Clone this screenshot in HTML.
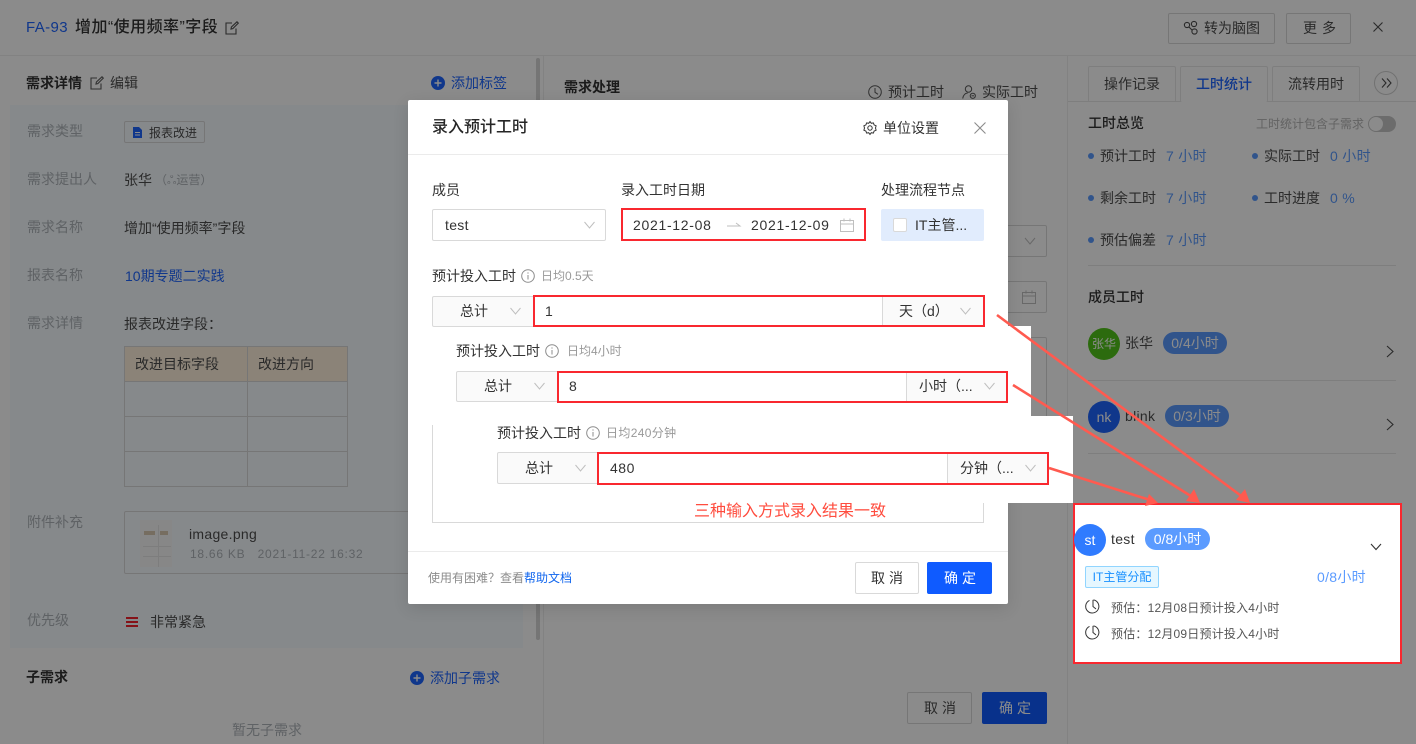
<!DOCTYPE html>
<html lang="zh">
<head>
<meta charset="utf-8">
<title>录入预计工时</title>
<style>
html,body{margin:0;padding:0}
body{width:1416px;height:744px;position:relative;overflow:hidden;background:#fff;font-family:"Liberation Sans","Noto Sans CJK SC",sans-serif;font-size:14px;color:#222}
.a{position:absolute;box-sizing:border-box}
.t{position:absolute;white-space:nowrap;line-height:20px;height:20px}
.l{color:#aeb4b9}
.b{font-weight:500;color:#333}
.blue{color:#1f66ff}
.v{color:#5b9bff;letter-spacing:.3px}
.dk{color:#4d4d4d}
.dot{position:absolute;width:6px;height:6px;border-radius:50%;background:#5b9bff}
.m{color:#333}
.g{color:#999;font-size:12px}
.bx{position:absolute;box-sizing:border-box;border:1px solid #d9d9d9;border-radius:2px}
svg{position:absolute;overflow:visible}
.red{position:absolute;box-sizing:border-box;border:2px solid #f9282f}
.num{letter-spacing:.7px}
</style>
</head>
<body>
<!-- page structure lines -->
<div class="a" style="left:0;top:55px;width:1416px;height:1px;background:#eee"></div>
<div class="a" style="left:543px;top:56px;width:1px;height:688px;background:#eee"></div>
<div class="a" style="left:1067px;top:56px;width:1px;height:688px;background:#eee"></div>
<div class="a" style="left:10px;top:105px;width:513px;height:543px;background:#f6fbff"></div>
<div class="a" style="left:536px;top:58px;width:4px;height:582px;background:#d7d7d7;border-radius:2px"></div>

<!-- header -->
<div class="t" style="left:26px;top:18px;font-size:15px;color:#1f66ff;letter-spacing:.4px">FA-93</div>
<div class="t b" style="left:75px;top:18px;font-size:16px;letter-spacing:.45px">增加“使用频率”字段</div>
<svg style="left:225px;top:21px" width="14" height="14" viewBox="0 0 14 14" fill="none" stroke="#4d4d4d" stroke-width="1.1"><path d="M11 7.5V13H1V2h6M6 8l.4-2L12 .8l1.3 1.3L7.8 7.6z"/></svg>

<div class="bx" style="left:1168px;top:13px;width:107px;height:31px"></div>
<svg style="left:1183px;top:20px" width="16" height="16" viewBox="0 0 16 16" fill="none" stroke="#4d4d4d" stroke-width="1.1"><circle cx="4" cy="5" r="2.6"/><circle cx="11" cy="4" r="2.6"/><circle cx="11.5" cy="11.5" r="2.6"/><path d="M6 7l3 3"/></svg>
<div class="t dk" style="left:1204px;top:18px">转为脑图</div>
<div class="bx" style="left:1286px;top:13px;width:65px;height:31px"></div>
<div class="t dk" style="left:1303px;top:18px;letter-spacing:5px">更多</div>
<svg style="left:1373px;top:22px" width="10" height="10" viewBox="0 0 10 10" stroke="#4d4d4d" stroke-width="1.1"><path d="M.5.5l9 9M9.5.5l-9 9"/></svg>

<!-- left column -->
<div class="t b" style="left:26px;top:73px;font-weight:700">需求详情</div>
<svg style="left:90px;top:76px" width="14" height="14" viewBox="0 0 14 14" fill="none" stroke="#5a5a5a" stroke-width="1.1"><path d="M11 7.5V13H1V2h6M6 8l.4-2L12 .8l1.3 1.3L7.8 7.6z"/></svg>
<div class="t dk" style="left:110px;top:73px">编辑</div>
<svg style="left:431px;top:76px" width="14" height="14" viewBox="0 0 14 14"><circle cx="7" cy="7" r="7" fill="#1f66ff"/><path d="M7 3.5v7M3.5 7h7" stroke="#fff" stroke-width="1.4"/></svg>
<div class="t blue" style="left:451px;top:73px">添加标签</div>

<div class="t l" style="left:27px;top:121px">需求类型</div>
<div class="t l" style="left:27px;top:169px">需求提出人</div>
<div class="t l" style="left:27px;top:217px">需求名称</div>
<div class="t l" style="left:27px;top:265px">报表名称</div>
<div class="t l" style="left:27px;top:313px">需求详情</div>
<div class="t l" style="left:27px;top:512px">附件补充</div>
<div class="t l" style="left:27px;top:610px">优先级</div>

<div class="bx" style="left:124px;top:121px;width:81px;height:22px"></div>
<svg style="left:133px;top:127px" width="9" height="11" viewBox="0 0 9 11"><path d="M0 0h6l3 3v8H0z" fill="#1f66ff"/><path d="M2 5.5h5M2 8h5" stroke="#fff"/></svg>
<div class="t dk" style="left:149px;top:123px;font-size:12px">报表改进</div>
<div class="t dk" style="left:124px;top:170px">张华</div>
<div class="t l" style="left:155px;top:170px;font-size:12px">（ஃ运营）</div>
<div class="t dk" style="left:124px;top:218px">增加“使用频率”字段</div>
<div class="t blue" style="left:125px;top:266px">10期专题二实践</div>
<div class="t dk" style="left:124px;top:314px">报表改进字段：</div>

<div class="a" style="left:124px;top:346px;width:224px;height:35px;background:#fff1dc"></div>
<svg style="left:124px;top:346px" width="224" height="141" fill="none" stroke="#d9d9d9" stroke-width="1"><path d="M.5.5h223v140H.5zM123.5.5v140M.5 35.5h223M.5 70.5h223M.5 105.5h223"/></svg>
<div class="t dk" style="left:135px;top:354px">改进目标字段</div>
<div class="t dk" style="left:258px;top:354px">改进方向</div>

<div class="bx" style="left:124px;top:511px;width:300px;height:63px"></div>
<div class="a" style="left:140px;top:520px;width:32px;height:47px;background:#f7f7f7"></div>
<div class="a" style="left:144px;top:531px;width:11px;height:4px;background:#d8c8b0"></div>
<div class="a" style="left:160px;top:531px;width:8px;height:4px;background:#d8c8b0"></div>
<div class="a" style="left:143px;top:546px;width:28px;height:1px;background:#e6e6e6"></div>
<div class="a" style="left:143px;top:556px;width:28px;height:1px;background:#e6e6e6"></div>
<div class="a" style="left:158px;top:525px;width:1px;height:42px;background:#e6e6e6"></div>
<div class="t dk" style="left:189px;top:524px;letter-spacing:.3px">image.png</div>
<div class="t l" style="left:190px;top:544px;font-size:12px;letter-spacing:.75px">18.66 KB&nbsp;&nbsp; 2021-11-22 16:32</div>

<div class="a" style="left:126px;top:617px;width:12px;height:2px;background:#f5222d"></div>
<div class="a" style="left:126px;top:621px;width:12px;height:2px;background:#f5222d"></div>
<div class="a" style="left:126px;top:625px;width:12px;height:2px;background:#f5222d"></div>
<div class="t dk" style="left:150px;top:612px">非常紧急</div>

<div class="t b" style="left:26px;top:667px;font-weight:700">子需求</div>
<svg style="left:410px;top:671px" width="14" height="14" viewBox="0 0 14 14"><circle cx="7" cy="7" r="7" fill="#1f66ff"/><path d="M7 3.5v7M3.5 7h7" stroke="#fff" stroke-width="1.4"/></svg>
<div class="t blue" style="left:430px;top:668px">添加子需求</div>
<div class="t l" style="left:232px;top:720px">暂无子需求</div>

<!-- middle column -->
<div class="t b" style="left:564px;top:77px;font-weight:700">需求处理</div>
<svg style="left:868px;top:85px" width="14" height="14" viewBox="0 0 14 14" fill="none" stroke="#5a5a5a" stroke-width="1"><circle cx="7" cy="7" r="6.3"/><path d="M7 3v4.3l3 2"/></svg>
<div class="t dk" style="left:888px;top:82px">预计工时</div>
<svg style="left:962px;top:85px" width="14" height="14" viewBox="0 0 14 14" fill="none" stroke="#5a5a5a" stroke-width="1"><circle cx="6.5" cy="4" r="3.2"/><path d="M.7 13.5c.6-3.5 2.6-5.3 5-5.5"/><circle cx="10.8" cy="10.8" r="2.6"/><path d="M9.5 10.8h2.6"/></svg>
<div class="t dk" style="left:982px;top:82px">实际工时</div>

<div class="bx" style="left:960px;top:225px;width:87px;height:32px"></div>
<svg style="left:1024px;top:237px" width="12" height="8" fill="none" stroke="#bfbfbf"><path d="M1 1l5 6 5-6"/></svg>
<div class="bx" style="left:960px;top:281px;width:87px;height:32px"></div>
<svg style="left:1022px;top:290px" width="14" height="14" viewBox="0 0 14 14" fill="none" stroke="#bfbfbf"><path d="M.5 2.5h13v11H.5zM.5 6h13M4 .5v3M10 .5v3"/></svg>
<div class="bx" style="left:960px;top:337px;width:87px;height:100px"></div>

<div class="bx" style="left:907px;top:692px;width:65px;height:32px"></div>
<div class="t dk" style="left:924px;top:698px;letter-spacing:4px">取消</div>
<div class="a" style="left:982px;top:692px;width:65px;height:32px;background:#0f5bff;border-radius:2px"></div>
<div class="t" style="left:999px;top:698px;letter-spacing:4px;color:#fff">确定</div>

<!-- right column -->
<div class="a" style="left:1068px;top:101px;width:348px;height:1px;background:#e8e8e8"></div>
<div class="bx" style="left:1088px;top:66px;width:88px;height:36px;border-color:#e8e8e8;border-bottom:0"></div>
<div class="t dk" style="left:1104px;top:74px">操作记录</div>
<div class="bx" style="left:1180px;top:66px;width:88px;height:36px;border-color:#e8e8e8;border-bottom:0;background:#fff"></div>
<div class="t blue" style="left:1196px;top:74px;font-weight:500">工时统计</div>
<div class="bx" style="left:1272px;top:66px;width:88px;height:36px;border-color:#e8e8e8;border-bottom:0"></div>
<div class="t dk" style="left:1288px;top:74px">流转用时</div>
<div class="a" style="left:1374px;top:71px;width:24px;height:24px;border:1px solid #d0d0d0;border-radius:50%"></div>
<svg style="left:1381px;top:78px" width="11" height="10" fill="none" stroke="#4d4d4d" stroke-width="1.1"><path d="M1 .5L5 5 1 9.5M6 .5L10 5 6 9.5"/></svg>

<div class="t b" style="left:1088px;top:113px">工时总览</div>
<div class="t" style="left:1256px;top:114px;font-size:12px;color:#b5b5b5">工时统计包含子需求</div>
<div class="a" style="left:1368px;top:116px;width:28px;height:16px;border-radius:8px;background:#c6c6c6"></div>
<div class="a" style="left:1369px;top:117px;width:14px;height:14px;border-radius:50%;background:#fff"></div>

<div class="dot" style="left:1088px;top:153px"></div>
<div class="t dk" style="left:1100px;top:146px">预计工时</div>
<div class="t v" style="left:1166px;top:146px">7 小时</div>
<div class="dot" style="left:1252px;top:153px"></div>
<div class="t dk" style="left:1264px;top:146px">实际工时</div>
<div class="t v" style="left:1330px;top:146px">0 小时</div>
<div class="dot" style="left:1088px;top:195px"></div>
<div class="t dk" style="left:1100px;top:188px">剩余工时</div>
<div class="t v" style="left:1166px;top:188px">7 小时</div>
<div class="dot" style="left:1252px;top:195px"></div>
<div class="t dk" style="left:1264px;top:188px">工时进度</div>
<div class="t v" style="left:1330px;top:188px">0 %</div>
<div class="dot" style="left:1088px;top:237px"></div>
<div class="t dk" style="left:1100px;top:230px">预估偏差</div>
<div class="t v" style="left:1166px;top:230px">7 小时</div>
<div class="a" style="left:1088px;top:265px;width:308px;height:1px;background:#e8e8e8"></div>

<div class="t b" style="left:1088px;top:287px">成员工时</div>
<div class="a" style="left:1088px;top:328px;width:32px;height:32px;border-radius:50%;background:#52c41a;color:#fff;font-size:12px;line-height:32px;text-align:center">张华</div>
<div class="t dk" style="left:1125px;top:333px">张华</div>
<div class="a" style="left:1163px;top:332px;width:64px;height:22px;border-radius:11px;background:#5b9bff;color:#fff;line-height:22px;text-align:center">0/4小时</div>
<svg style="left:1386px;top:345px" width="8" height="13" fill="none" stroke="#4d4d4d" stroke-width="1.1"><path d="M1 1l6 5.5L1 12"/></svg>
<div class="a" style="left:1088px;top:380px;width:308px;height:1px;background:#e8e8e8"></div>
<div class="a" style="left:1088px;top:401px;width:32px;height:32px;border-radius:50%;background:#1f66ff;color:#fff;font-size:14px;line-height:32px;text-align:center">nk</div>
<div class="t dk" style="left:1125px;top:406px;letter-spacing:.3px">blink</div>
<div class="a" style="left:1165px;top:405px;width:64px;height:22px;border-radius:11px;background:#5b9bff;color:#fff;line-height:22px;text-align:center">0/3小时</div>
<svg style="left:1386px;top:418px" width="8" height="13" fill="none" stroke="#4d4d4d" stroke-width="1.1"><path d="M1 1l6 5.5L1 12"/></svg>
<div class="a" style="left:1088px;top:453px;width:308px;height:1px;background:#e8e8e8"></div>

<!-- dimming mask -->
<div class="a" style="left:0;top:0;width:1416px;height:744px;background:rgba(0,0,0,.455)"></div>

<!-- modal -->
<div class="a" style="left:408px;top:100px;width:600px;height:504px;background:#fff;border-radius:2px;box-shadow:0 4px 16px rgba(0,0,0,.12)"></div>
<!-- pasted white patches -->
<div class="a" style="left:1008px;top:326px;width:23px;height:90px;background:#fff"></div>
<div class="a" style="left:1008px;top:416px;width:65px;height:87px;background:#fff"></div>

<div class="t" style="left:432px;top:118px;font-size:16px;font-weight:500;color:#262626">录入预计工时</div>
<svg style="left:863px;top:121px" width="14" height="14" viewBox="0 0 14 14" fill="none" stroke="#333" stroke-width="1"><path d="M7 .6l1.3 1.7 2.1-.4.7 2 2 .9-.6 2.2.6 2.2-2 .9-.7 2-2.1-.4L7 13.4l-1.3-1.7-2.1.4-.7-2-2-.9.6-2.2-.6-2.2 2-.9.7-2 2.1.4z"/><circle cx="7" cy="7" r="2.2"/></svg>
<div class="t m" style="left:883px;top:118px">单位设置</div>
<svg style="left:974px;top:122px" width="12" height="12" viewBox="0 0 12 12" stroke="#8c8c8c" stroke-width="1.1"><path d="M.5.5l11 11M11.5.5l-11 11"/></svg>
<div class="a" style="left:408px;top:154px;width:600px;height:1px;background:#ebebeb"></div>

<div class="t m" style="left:432px;top:180px">成员</div>
<div class="a" style="left:432px;top:209px;width:174px;height:32px;border:1px solid #d9d9d9;border-radius:2px"></div>
<div class="t m" style="left:445px;top:215px;letter-spacing:.3px">test</div>
<svg style="left:584px;top:221px" width="11" height="8" fill="none" stroke="#bfbfbf"><path d="M.5 1l5 6 5-6"/></svg>

<div class="t m" style="left:621px;top:180px">录入工时日期</div>
<div class="red" style="left:621px;top:208px;width:245px;height:33px"></div>
<div class="t m num" style="left:633px;top:215px">2021-12-08</div>
<svg style="left:727px;top:222px" width="14" height="6" fill="none" stroke="#bfbfbf"><path d="M0 4h13L9 1"/></svg>
<div class="t m num" style="left:751px;top:215px">2021-12-09</div>
<svg style="left:840px;top:218px" width="14" height="14" viewBox="0 0 14 14" fill="none" stroke="#bfbfbf"><path d="M.5 2.5h13v11H.5zM.5 6h13M4 .5v3M10 .5v3"/></svg>

<div class="t m" style="left:881px;top:180px">处理流程节点</div>
<div class="a" style="left:881px;top:209px;width:103px;height:32px;background:#e1ecfd;border-radius:2px"></div>
<div class="a" style="left:893px;top:218px;width:14px;height:14px;background:#fff;border:1px solid #d9d9d9;border-radius:2px"></div>
<div class="t m" style="left:915px;top:215px">IT主管...</div>

<!-- row 1 -->
<div class="t m" style="left:432px;top:266px">预计投入工时</div>
<svg style="left:521px;top:269px" width="14" height="14" viewBox="0 0 14 14" fill="none" stroke="#8c8c8c"><circle cx="7" cy="7" r="6.3"/><path d="M7 6v4.5M7 3.4v1.2"/></svg>
<div class="t g" style="left:541px;top:266px">日均0.5天</div>
<div class="a" style="left:432px;top:296px;width:102px;height:31px;background:#fafafa;border:1px solid #d9d9d9;border-radius:2px 0 0 2px"></div>
<div class="t m" style="left:460px;top:301px">总计</div>
<svg style="left:510px;top:307px" width="11" height="8" fill="none" stroke="#bfbfbf"><path d="M.5 1l5 6 5-6"/></svg>
<div class="a" style="left:882px;top:296px;width:102px;height:31px;background:#fafafa;border-left:1px solid #d9d9d9"></div>
<div class="red" style="left:533px;top:295px;width:452px;height:32px"></div>
<div class="t m" style="left:545px;top:301px">1</div>
<div class="t m" style="left:899px;top:301px">天（d）</div>
<svg style="left:960px;top:307px" width="11" height="8" fill="none" stroke="#bfbfbf"><path d="M.5 1l5 6 5-6"/></svg>

<!-- row 2 -->
<div class="t m" style="left:456px;top:341px">预计投入工时</div>
<svg style="left:545px;top:344px" width="14" height="14" viewBox="0 0 14 14" fill="none" stroke="#8c8c8c"><circle cx="7" cy="7" r="6.3"/><path d="M7 6v4.5M7 3.4v1.2"/></svg>
<div class="t g" style="left:567px;top:341px">日均4小时</div>
<div class="a" style="left:456px;top:371px;width:102px;height:31px;background:#fafafa;border:1px solid #d9d9d9;border-radius:2px 0 0 2px"></div>
<div class="t m" style="left:484px;top:376px">总计</div>
<svg style="left:534px;top:382px" width="11" height="8" fill="none" stroke="#bfbfbf"><path d="M.5 1l5 6 5-6"/></svg>
<div class="a" style="left:906px;top:371px;width:102px;height:31px;background:#fafafa;border-left:1px solid #d9d9d9"></div>
<div class="red" style="left:557px;top:371px;width:451px;height:32px"></div>
<div class="t m" style="left:569px;top:376px">8</div>
<div class="t m" style="left:919px;top:376px">小时（...</div>
<svg style="left:984px;top:382px" width="11" height="8" fill="none" stroke="#bfbfbf"><path d="M.5 1l5 6 5-6"/></svg>

<!-- row 3 -->
<div class="a" style="left:432px;top:425px;width:1px;height:98px;background:#d9d9d9"></div>
<div class="a" style="left:432px;top:522px;width:552px;height:1px;background:#d9d9d9"></div>
<div class="a" style="left:983px;top:503px;width:1px;height:20px;background:#d9d9d9"></div>
<div class="t m" style="left:497px;top:423px">预计投入工时</div>
<svg style="left:586px;top:426px" width="14" height="14" viewBox="0 0 14 14" fill="none" stroke="#8c8c8c"><circle cx="7" cy="7" r="6.3"/><path d="M7 6v4.5M7 3.4v1.2"/></svg>
<div class="t g" style="left:606px;top:423px;letter-spacing:.35px">日均240分钟</div>
<div class="a" style="left:497px;top:452px;width:102px;height:32px;background:#fafafa;border:1px solid #d9d9d9;border-radius:2px 0 0 2px"></div>
<div class="t m" style="left:525px;top:458px">总计</div>
<svg style="left:575px;top:464px" width="11" height="8" fill="none" stroke="#bfbfbf"><path d="M.5 1l5 6 5-6"/></svg>
<div class="a" style="left:947px;top:452px;width:102px;height:32px;background:#fafafa;border-left:1px solid #d9d9d9"></div>
<div class="red" style="left:597px;top:452px;width:452px;height:33px"></div>
<div class="t m" style="left:610px;top:458px;letter-spacing:.5px">480</div>
<div class="t m" style="left:960px;top:458px">分钟（...</div>
<svg style="left:1025px;top:464px" width="11" height="8" fill="none" stroke="#bfbfbf"><path d="M.5 1l5 6 5-6"/></svg>

<div class="t" style="left:694px;top:502px;font-size:16px;color:#ff4c3e">三种输入方式录入结果一致</div>

<!-- footer -->
<div class="a" style="left:408px;top:551px;width:600px;height:1px;background:#ebebeb"></div>
<div class="t" style="left:428px;top:568px;font-size:12px;color:#8c8c8c">使用有困难？查看<span style="color:#1166ee">帮助文档</span></div>
<div class="a" style="left:855px;top:562px;width:64px;height:32px;border:1px solid #d9d9d9;border-radius:2px"></div>
<div class="t m" style="left:871px;top:568px;letter-spacing:4px">取消</div>
<div class="a" style="left:927px;top:562px;width:65px;height:32px;background:#0f5bff;border-radius:2px"></div>
<div class="t" style="left:944px;top:568px;letter-spacing:4px;color:#fff">确定</div>

<!-- highlighted box -->
<div class="a" style="left:1073px;top:503px;width:329px;height:161px;background:#fff;border:2px solid #f9282f"></div>
<div class="a" style="left:1074px;top:524px;width:32px;height:32px;border-radius:50%;background:#2f7bff;color:#fff;line-height:32px;text-align:center">st</div>
<div class="t m" style="left:1111px;top:529px;letter-spacing:.3px">test</div>
<div class="a" style="left:1145px;top:528px;width:65px;height:22px;border-radius:11px;background:#5b9bff;color:#fff;line-height:22px;text-align:center">0/8小时</div>
<svg style="left:1370px;top:543px" width="12" height="8" fill="none" stroke="#333" stroke-width="1.1"><path d="M1 1l5 5.5L11 1"/></svg>
<div class="a" style="left:1085px;top:566px;width:74px;height:22px;background:#e6f7ff;border:1px solid #91d5ff;border-radius:2px;color:#1890ff;font-size:12px;line-height:20px;text-align:center">IT主管分配</div>
<div class="t" style="left:1317px;top:567px;color:#5b9bff;letter-spacing:.3px">0/8小时</div>
<svg style="left:1086px;top:599px" width="15" height="15" viewBox="0 0 15 15" fill="none" stroke="#333" stroke-width="1"><path d="M3.5 1.4A6.6 6.6 0 1 0 7.5 .9"/><path d="M7 .9v6.6l3 2.5"/></svg>
<div class="t" style="left:1111px;top:598px;font-size:12px;color:#555;letter-spacing:.2px">预估：12月08日预计投入4小时</div>
<svg style="left:1086px;top:625px" width="15" height="15" viewBox="0 0 15 15" fill="none" stroke="#333" stroke-width="1"><path d="M3.5 1.4A6.6 6.6 0 1 0 7.5 .9"/><path d="M7 .9v6.6l3 2.5"/></svg>
<div class="t" style="left:1111px;top:624px;font-size:12px;color:#555;letter-spacing:.2px">预估：12月09日预计投入4小时</div>

<!-- arrows -->
<svg style="left:0;top:0" width="1416" height="744" fill="none">
<g stroke="#ff5a4f" stroke-width="2.6">
<path d="M997 315L1244 498"/>
<path d="M1013 385L1194 498"/>
<path d="M1049 468L1150 500"/>
</g>
<g fill="#ff5a4f">
<path d="M1250 503L1236 500 1245 489z"/>
<path d="M1200 503L1186 501 1194 489z"/>
<path d="M1158 503L1145 506 1149 494z"/>
</g>
</svg>
</body>
</html>
